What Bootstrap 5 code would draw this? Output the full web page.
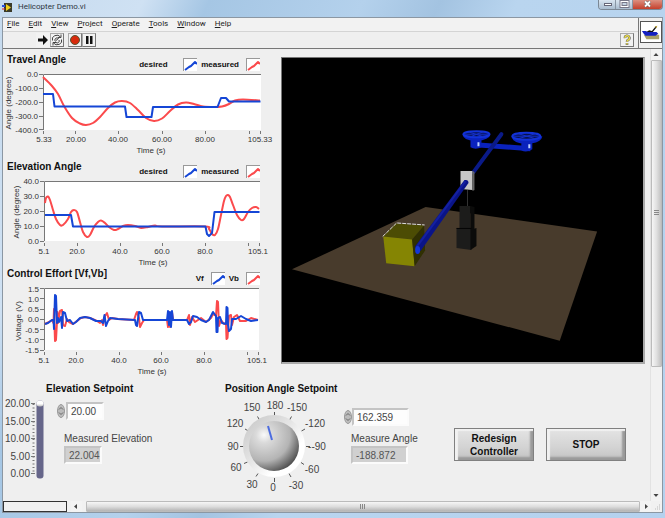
<!DOCTYPE html>
<html lang="en">
<head>
<meta charset="utf-8">
<meta name="viewport" content="width=device-width, initial-scale=1">
<title>Helicopter Demo.vi</title>
<link rel="stylesheet" href="https://cdn.jsdelivr.net/npm/bootstrap@5.3.0/dist/css/bootstrap.min.css">
<style>
  body { font: 10px/12px "Liberation Sans", Arial, sans-serif; color: #222; background: #b2d0ee; }
  svg { display: block; flex: none; }
  button { padding: 0; border: 0; color: inherit; }
  .app { padding: 0 2px 5px 2px; background: linear-gradient(115deg, #c5daee 0, #cfe1f3 130px, #a5c6e4 190px, #b4d1ec 330px, #a3c3e1 400px, #b9d5ef 470px, #b4d1ee 100%); }
  .titlebar { height: 17px; font: 8px/14px Roboto, sans-serif; color: #2c3440; }
  .titlebar .caption { padding-left: 6px; height: 14px; }
  .win-btns { height: 10px; border: 1px solid #7b8794; border-top: 0; border-radius: 0 0 4px 4px; overflow: hidden; }
  .win-btns button { width: 17px; background: linear-gradient(#d9e5f0, #a9bccf); border-right: 1px solid #8795a3; }
  .win-btns .win-close { width: 29px; background: linear-gradient(#dc9080, #c5402c); border: 0; }
  .frame { border: 1px solid #8b97a3; background: #efefef; }
  .menus { height: 14px; gap: 9px; padding-left: 4px; font: 8px/12px Roboto, sans-serif; border-bottom: 1px solid #d4d4d4; background: #f2f2f2; }
  .menus a { color: #222; text-decoration: none; }
  .tools { height: 16px; padding: 1px 0 0 33px; }
  .tool { width: 14px; height: 14px; background: #f2f2f2; border: 1px solid #aaa; border-right-color: #777; border-bottom-color: #777; }
  .tool.flat { border-color: transparent; }
  .topbar { border-bottom: 1px solid #777; }
  .vi-icon { border-left: 1px solid #777; padding: 3px 0 3px 1px; }
  .vi-icon svg { border: 1px solid #555; background: #fff; }
  .charts { flex: 0 0 270px; }
  .chart-head { height: 19px; padding: 0 13px 1px 4px; }
  h2 { font-size: 10px; line-height: 14px; font-weight: 700; margin: 0; color: #111; white-space: nowrap; }
  .key { font-size: 8px; line-height: 10px; font-weight: 700; gap: 4px; color: #111; }
  .key label, .key div { gap: 7px; }
  .key span { min-width: 8px; }
  .key.wide span { min-width: 37px; }
  .key svg { background: #fff; border-top: 1px solid #999; border-left: 1px solid #999; }
  .chart { width: 270px; overflow: visible; }
  .chart text { font-size: 8px; fill: #333; }
  .gauge { overflow: visible; }
  .gauge text { font-size: 10px; fill: #444; }
  .e { text-anchor: end; } .m { text-anchor: middle; }
  .area { fill: #fff; }
  .edge, .ticks { fill: none; stroke: #777; }
  .d { fill: none; stroke: #1546d6; stroke-width: 2; stroke-linejoin: round; }
  .r { fill: none; stroke: #fb4a4c; stroke-width: 2; stroke-linejoin: round; }
  .view3d { margin: 4px 5px 0 8px; border: 1px solid #777; border-right: 2px solid #aaa; border-bottom: 2px solid #aaa; background: #000; }
  .lower { padding-top: 5px; }
  .num { height: 18px; font-size: 10px; line-height: 12px; color: #444; padding: 1px 0 0 3px; background: #fdfdfd; border: 2px solid #fbfbfb; border-top-color: #c4c4c4; border-left-color: #c4c4c4; border-radius: 0; outline: 0; min-width: 0; }
  .num[readonly] { display: block; background: #d0d0d0; color: #555; }
  .w-s { width: 38px; }
  .w-l { width: 57px; }
  .fields label { font-size: 10px; line-height: 14px; color: #444; white-space: nowrap; display: block; margin-left: 7px; }
  .fields .num[readonly] { margin-left: 7px; }
  .elev-col { flex: 0 0 222px; }
  .scale-row { padding-top: 14px; }
  .elev-fields { padding-left: 2px; }
  .elev-fields .inner { padding: 6px 0 0 11px; }
  .elev-fields label { padding-top: 12px; }
  .angle-fields { padding-top: 26px; }
  .angle-fields label { padding-top: 6px; }
  .vslider { width: 8px; height: 78px; margin-top: 4px; }
  .vslider input { flex: none; width: 78px; height: 7px; margin: 0; transform: rotate(-90deg); -webkit-appearance: none; appearance: none; background: #66668a; border-radius: 3px; }
  .vslider input::-webkit-slider-thumb { -webkit-appearance: none; width: 6px; height: 7px; background: linear-gradient(90deg, #bbb, #fff 45%); border-radius: 3px; }
  .pushers { gap: 12px; padding: 46px 24px 0 0; }
  .push { height: 33px; width: 80px; font-size: 10px; line-height: 13px; font-weight: 700; color: #111; border: 1px solid #808080; background: linear-gradient(#e4e4e4, #d3d3d3 60%, #c2c2c2); box-shadow: inset 3px 2px 1px #f1f1f1, inset -3px -3px 2px #999; }
  .vbar { flex: 0 0 11px; background: #f1f1f1; border-left: 1px solid #e2e2e2; }
  .arrow { flex: none; background: #f3f3f3; width: 11px; height: 11px; }
  .vthumb { flex: 307; border: 1px solid #bbb; border-radius: 1px; background: linear-gradient(90deg, #f6f6f6, #e0e0e0 50%, #c2c2c2); }
  .vrest { flex: 124; }
  .hbar { height: 11px; background: #f1f1f1; }
  .status { width: 64px; border: 1px solid #333; }
  .hthumb { border: 1px solid #bbb; border-radius: 1px; background: linear-gradient(#f6f6f6, #dedede 50%, #b4b4b4); }
</style>
<script src="https://cdn.jsdelivr.net/npm/bootstrap@5.3.0/dist/js/bootstrap.bundle.min.js"></script>
</head>
<body>
<div class="app d-flex flex-column min-vh-100">
  <header class="titlebar d-flex justify-content-between align-items-start">
    <div class="d-flex align-items-center">
      <svg width="10" height="11" viewBox="0 0 10 11" aria-hidden="true"><rect x="2" y="1" width="8" height="9" fill="#3a3a2a"/><path d="M4 2l5 3.500-5 3.500z" fill="#f2d21c"/><path d="M0 4h3" stroke="#2b50e0" stroke-width="2"/><path d="M0 7h3" stroke="#e02a2a"/></svg>
      <span class="caption">Helicopter Demo.vi</span>
    </div>
    <div class="win-btns d-flex">
      <button aria-label="Minimize"><svg width="17" height="9"><rect x="5.500" y="3.500" width="7" height="2" fill="#fff" stroke="#667"/></svg></button>
      <button aria-label="Maximize"><svg width="17" height="9"><rect x="5" y="1.500" width="7" height="5" fill="none" stroke="#778" stroke-width="3"/><rect x="5" y="1.500" width="7" height="5" fill="none" stroke="#fff"/></svg></button>
      <button class="win-close" aria-label="Close"><svg width="29" height="9"><path d="M12 1.500l5 5m0-5l-5 5" stroke="#555" stroke-width="3"/><path d="M12 1.500l5 5m0-5l-5 5" stroke="#fff" stroke-width="2"/></svg></button>
    </div>
  </header>

  <div class="frame d-flex flex-column flex-grow-1">
    <div class="topbar d-flex">
      <div class="flex-grow-1">
        <nav class="menus d-flex">
          <a href="#"><u>F</u>ile</a><a href="#"><u>E</u>dit</a><a href="#"><u>V</u>iew</a><a href="#"><u>P</u>roject</a><a href="#"><u>O</u>perate</a><a href="#"><u>T</u>ools</a><a href="#"><u>W</u>indow</a><a href="#"><u>H</u>elp</a>
        </nav>
        <div class="tools d-flex">
          <button class="tool flat" aria-label="Run"><svg width="12" height="12"><path d="M1 4.500h5v-3.500l5 5-5 5v-3.500h-5z" fill="#111"/></svg></button>
          <button class="tool" aria-label="Run continuously"><svg width="12" height="12"><path d="M1.500 6.500a4.500 4 0 0 1 8-3.500M10 .5v3H7M10.500 5.500a4.500 4 0 0 1-8 3.500M2 11.500v-3h3M4.500 7.500a2 2 0 1 1 3-3M5 6.500l2.500-2M5 8.500a2 2 0 0 0 3-2.500" fill="none" stroke="#444"/></svg></button>
          <button class="tool ms-1" aria-label="Abort"><svg width="12" height="12"><circle cx="6" cy="6" r="4.500" fill="#d82a0c" stroke="#553" stroke-width="1"/></svg></button>
          <button class="tool" aria-label="Pause"><svg width="12" height="12"><path d="M3 2h2.500v8H3zM7 2h2.500v8H7z" fill="#111"/></svg></button>
          <button class="tool ms-auto me-1" aria-label="Help"><svg width="12" height="12"><path d="M4 4.200a2.200 2.200 0 1 1 3 1.800q-1 .5-1 1.700M6 9v2" fill="none" stroke="#666" stroke-width="2.600"/><path d="M4 4.200a2.200 2.200 0 1 1 3 1.800q-1 .5-1 1.700M6 9v1.600" fill="none" stroke="#eadb4a" stroke-width="1.400"/></svg></button>
        </div>
      </div>
      <div class="vi-icon"><svg width="22" height="22" viewBox="0 0 22 22" role="img" aria-label="VI icon"><path d="M3 14h17v5H6z" fill="#a8a068"/><path d="M1 10l4 0 3 1h9l2 2-3 2H5l-2-2z" fill="#1420c0"/><path d="M6 11l3-2 3 1 4-5 1 1-4 5z" fill="#111"/><path d="M15 5l3-1-1 3z" fill="#b49a30"/></svg></div>
    </div>

    <div class="d-flex flex-grow-1">
      <main class="flex-grow-1 d-flex flex-column">
        <div class="d-flex pt-1">
          <div class="charts">
            <section>
              <div class="chart-head d-flex justify-content-between">
                <h2>Travel Angle</h2>
                <div class="key wide d-flex align-items-end">
                  <div class="d-flex align-items-center"><span>desired</span><svg width="14" height="13"><path class="d" d="M1 11l4-3 2-1 4-4 2 2"/></svg></div>
                  <div class="d-flex align-items-center"><span>measured</span><svg width="14" height="13"><path class="r" d="M1 11l4-3 2-1 4-4 2 2"/></svg></div>
                </div>
              </div>
              <svg class="chart" height="88" viewBox="3 72 270 88">
                <path class="area" d="M43 74h218v56H43z"/><path class="edge" d="M43.500 130V74.500H261"/>
                <path class="ticks" d="M39 74.500h4M39 88.500h4M39 102.500h4M39 116.500h4M39 129.500h4M43.500 131v3M75.500 131v3M118.500 131v3M162.500 131v3M205.500 131v3M249.500 131v3M260.500 131v3"/>
                <g class="e"><text x="38" y="77">0.0</text><text x="38" y="91">-100.0</text><text x="38" y="105">-200.0</text><text x="38" y="119">-300.0</text><text x="38" y="133">-400.0</text></g>
                <g class="m"><text x="44" y="142">5.33</text><text x="76" y="142">20.00</text><text x="118" y="142">40.00</text><text x="162" y="142">60.00</text><text x="205" y="142">80.00</text><text x="260" y="142">105.33</text><text x="151" y="153">Time (s)</text><text transform="translate(11 103) rotate(-90)">Angle (degree)</text></g>
                <path class="r" data-pts="43,77 52,86 58,94 64,106 72,118 80,123.500 86,125 93,123 100,117 108,108 115,102.500 122,101 130,103 138,110 146,118 154,121 162,118.500 170,111 178,104.500 186,102.500 194,104 203,106.500 214,107 222,106.500 229,104 235,100.500 243,99.500 260,100.500"/>
                <path class="d" d="M43 94H53L54.500 106.500H125L126.500 117H151.500L153 107H217.500L221 98H226L229 101.500H260.500"/>
              </svg>
            </section>
            <section>
              <div class="chart-head d-flex justify-content-between">
                <h2>Elevation Angle</h2>
                <div class="key wide d-flex align-items-end">
                  <div class="d-flex align-items-center"><span>desired</span><svg width="14" height="13"><path class="d" d="M1 11l4-3 2-1 4-4 2 2"/></svg></div>
                  <div class="d-flex align-items-center"><span>measured</span><svg width="14" height="13"><path class="r" d="M1 11l4-3 2-1 4-4 2 2"/></svg></div>
                </div>
              </div>
              <svg class="chart" height="88" viewBox="3 179 270 88">
                <path class="area" d="M44 181h216v60H44z"/><path class="edge" d="M44.500 241V181.500H260"/>
                <path class="ticks" d="M40 181.500h4M40 196.500h4M40 211.500h4M40 226.500h4M40 241.500h4M44.500 243v3M77.500 243v3M120.500 243v3M162.500 243v3M205.500 243v3M248.500 243v3M259.500 243v3"/>
                <g class="e"><text x="39" y="184">40.0</text><text x="39" y="199">30.0</text><text x="39" y="214">20.0</text><text x="39" y="229">10.0</text><text x="39" y="244">0.0</text></g>
                <g class="m"><text x="44" y="254">5.1</text><text x="77" y="254">20.0</text><text x="120" y="254">40.0</text><text x="162" y="254">60.0</text><text x="205" y="254">80.0</text><text x="258" y="254">105.1</text><text x="153" y="265">Time (s)</text><text transform="translate(19 212) rotate(-90)">Angle (degree)</text></g>
                <path class="r" data-pts="45,203 46,198 48,196.500 50,200 53,210 56,219 60,225 63,225 68,219 71,212 74,210 77,212 80,222 83,232 87,237 90,235 94,227 98,222 101,220.500 105,223 109,227 114,230 118,229 123,226 128,225 135,226 141,228 148,227 155,225.500 162,226.500 205,226.500 209,229 212,234 215,235 218,229 221,215 224,201 226,196 228,195 230,197 233,205 237,215 241,220 244,219 248,212 252,208 256,207 259,209"/>
                <path class="d" d="M45 215H71L73 226.500H205.500L207 234L209 236L212 233L214.500 212H259.500"/>
              </svg>
            </section>
            <section>
              <div class="chart-head d-flex justify-content-between">
                <h2>Control Effort [Vf,Vb]</h2>
                <div class="key d-flex align-items-end">
                  <div class="d-flex align-items-center"><span>Vf</span><svg width="14" height="13"><path class="d" d="M1 11l4-3 2-1 4-4 2 2"/></svg></div>
                  <div class="d-flex align-items-center"><span>Vb</span><svg width="14" height="13"><path class="r" d="M1 11l4-3 2-1 4-4 2 2"/></svg></div>
                </div>
              </div>
              <svg class="chart" height="91" viewBox="3 286 270 91">
                <path class="area" d="M44 288h215v62H44z"/><path class="edge" d="M44.500 350V288.500H259"/>
                <path class="ticks" d="M40 288.500h4M40 298.500h4M40 309.500h4M40 319.500h4M40 329.500h4M40 339.500h4M40 350.500h4M44.500 352v3M76.500 352v3M119.500 352v3M161.500 352v3M204.500 352v3M247.500 352v3M258.500 352v3"/>
                <g class="e"><text x="39" y="292">1.5</text><text x="39" y="302">1.0</text><text x="39" y="312">0.5</text><text x="39" y="322">0.0</text><text x="39" y="333">-0.5</text><text x="39" y="343">-1.0</text><text x="39" y="353">-1.5</text></g>
                <g class="m"><text x="44" y="363">5.1</text><text x="76" y="363">20.0</text><text x="119" y="363">40.0</text><text x="161" y="363">60.0</text><text x="204" y="363">80.0</text><text x="257" y="363">105.1</text><text x="152" y="374">Time (s)</text><text transform="translate(21 321) rotate(-90)">Voltage (V)</text></g>
                <path class="r" d="M45 324L49 322 52 320 53.500 323 54 309 55 341 56 340 57.500 312 58 323 60 311 62 310 63 325 65 326 67 319 69 322 73 324 77 321 81 318 85 317 90 318 97 321 100 323 102 320 103 325 105 316 107 313 109 320 112 318 118 319 134 320 136 314 137 312 139 318 140 327 142 323 144 320 167 320 168 327 169 312 170 327 172 312 173 320 187 320 189 315 190 325 192 317 195 322 201 318 206 322 211 318 213 314 216 316 217 301 218 302 219 326 221 320 224 324 226 323 226.500 339 227.500 338 229 316 231 315 232 325 234 317 237 315 240 321 246 321 251 318 258 320"/>
                <path class="d" d="M45 324L48 323 52 320 53.500 320 54 329 55 295 56 296 57 323 58 318 59 322 61 317 62 328 63 312 65 313 67 321 70 320 73 324 76 322 80 318 85 317 90 318 96 321 101 321 103 323 104.500 315 106 326 108 321 110 318 118 319 135 320 136 325 137 326 139 312 141 313 143 320 167 320 168 311 169 325 170 312 171 327 172 311 173 320 187 320 189 324 191 322 193 316 197 317 201 320 206 322 209 320 213 312 216 316 216.500 332 217.500 332 218 318 220 317 222 323 226 324 226.500 307 227.500 308 228 325 229 331 231 329 232 319 236 319 241 316 246 319 251 321 258 320"/>
              </svg>
            </section>
          </div>
          <div class="flex-grow-1">
            <div class="view3d">
              <svg width="100%" height="304" viewBox="282 58 362 304" role="img" aria-label="3D helicopter view">
                <path d="M292 269.500L426 207 598 231.500 560.500 341z" fill="#483b2c"/>
                <path d="M468 190v17" stroke="#333"/>
                <path d="M460 206h11v24h-11zM457 228h15v22l-15-2z" fill="#1c1c1b"/><path d="M471 206l4 1v22l-4 1zM471 230l6-2v18l-6 4z" fill="#0b0b0a"/>
                <path d="M457 228.500h15" stroke="#050505"/>
                <g fill="#0a22bd"><path d="M476 142l55 4v5l-55-4z"/><path d="M471 138h11v9q-6 3-11 0zM522 140h11v9q-6 4-11 1z"/>
                <path d="M463 134h28q-1 6-14 6.500T463 134zM512 136h31q-1 7-15 7.500T512 136z"/></g>
                <ellipse cx="477" cy="134" rx="13" ry="3" fill="#07124f" stroke="#1232d8" stroke-width="2"/>
                <ellipse cx="527" cy="136" rx="14" ry="3.500" fill="#07124f" stroke="#1232d8" stroke-width="2"/>
                <path d="M465 134h24M470 132l14 4.500M484 131.500l-13 5M514 136h26M519 133.500l17 5M536 133.500l-17 5" stroke="#1430c8"/>
                <path d="M479 142v4M530 144v4" stroke="#bcd0ff" stroke-width="2"/>
                <path d="M474 172L502 134" stroke="#0a1a88" stroke-width="4" stroke-linecap="round"/>
                <path d="M461 171h12v19l-12-1z" fill="#c6c6c6"/><path d="M473 171l2 1v18l-2 1z" fill="#666"/>
                <path d="M383.500 236.500L396 223.500 424.500 225.500 412.500 239.500z" fill="#4c4c04"/><path d="M383.500 236.500l29 3 2.500 27-28.500-3z" fill="#858503"/><path d="M412.500 239.500l12-14 1 25-10.500 16z" fill="#303002"/>
                <path d="M383 236.500L397 223 425 225" fill="none" stroke="#ddd" stroke-dasharray="4 1"/>
                <path d="M415 247L465 180q4-1 4 3L421 251z" fill="#0a1488"/><path d="M417 247L466 181" stroke="#1420a2" stroke-width="2"/>
                <ellipse cx="418" cy="250" rx="2.500" ry="4" fill="#1438d8"/>
              </svg>
            </div>
          </div>
        </div>

        <div class="lower d-flex">
          <section class="elev-col d-flex">
            <div class="scale-row d-flex">
              <svg class="gauge" width="33" height="88" viewBox="3 396 33 88">
                <g class="e"><text x="30" y="407">20.00</text><text x="30" y="425">15.00</text><text x="30" y="442">10.00</text><text x="30" y="460">5.00</text><text x="30" y="477">0.00</text></g>
                <path d="M33.500 404v70" stroke="#777" stroke-width="2" stroke-dasharray="1 2.500"/><path class="ticks" d="M31 403.500h4M31 421.500h4M31 438.500h4M31 456.500h4M31 473.500h4"/>
              </svg>
              <div class="vslider d-flex justify-content-center align-items-center"><input type="range" min="0" max="20" value="20" aria-labelledby="elev"></div>
            </div>
            <div class="fields elev-fields">
              <h2 id="elev">Elevation Setpoint</h2>
              <div class="inner">
                <div class="d-flex align-items-center">
                  <svg width="9" height="14" aria-hidden="true"><ellipse cx="4" cy="7" rx="3.500" ry="6.500" fill="#bcbcbc" stroke="#999"/><path d="M2 5.500l2-2 2 2M2 8.500l2 2 2-2" fill="none" stroke="#666"/></svg>
                  <input class="num w-s" type="text" value="20.00" aria-labelledby="elev">
                </div>
                <label for="melev">Measured Elevation</label>
                <input class="num w-s" id="melev" type="text" readonly value="22.004">
              </div>
            </div>
          </section>
          <section class="d-flex">
            <div>
              <h2 id="posang">Position Angle Setpoint</h2>
              <svg class="gauge" width="119" height="98" viewBox="225 397 119 98" role="img" aria-labelledby="posang">
                <defs>
                  <linearGradient id="ring" x1="0" y1="0" x2="1" y2="1"><stop offset="0" stop-color="#c4c4c4"/><stop offset=".45" stop-color="#e6e6e6"/><stop offset=".7" stop-color="#fff"/></linearGradient>
                  <radialGradient id="ball" cx=".3" cy=".28" r=".8"><stop offset="0" stop-color="#fafafa"/><stop offset=".2" stop-color="#dadada"/><stop offset=".65" stop-color="#b4b4b4"/><stop offset="1" stop-color="#4c4c4c"/></radialGradient>
                </defs>
                <g stroke="#555"><path id="tk" d="M274.500 413v4M274.500 479v4M240 447.500h4M306 447.500h4M257.500 417.500l2 3.500M291.500 417.500l-2 3.500M245 430l3.500 2M305 430l-3.500 2M244 464.500l3.500-1.500M304 465.500l-3-2M256 477.500l2-3M291 478l-2-3.500"/></g>
                <circle cx="274" cy="447" r="31" fill="url(#ring)"/>
                <circle cx="274" cy="447" r="25" fill="url(#ball)"/>
                <path d="M268 427l4 14" stroke="#4c6ce0" stroke-width="2"/>
                <g class="m"><text x="275" y="410">180</text><text x="252" y="412">150</text><text x="297" y="412">-150</text><text x="235" y="428">120</text><text x="315" y="428">-120</text><text x="233" y="451">90</text><text x="317" y="451">--90</text><text x="236" y="472">60</text><text x="312" y="474">-60</text><text x="252" y="489">30</text><text x="273" y="492">0</text><text x="296" y="490">-30</text></g>
              </svg>
            </div>
            <div class="fields angle-fields">
              <div class="d-flex align-items-center">
                <svg width="8" height="14" aria-hidden="true"><ellipse cx="4" cy="7" rx="3.500" ry="6.500" fill="#bcbcbc" stroke="#999"/><path d="M2 5.500l2-2 2 2M2 8.500l2 2 2-2" fill="none" stroke="#666"/></svg>
                <input class="num w-l" type="text" value="162.359" aria-labelledby="posang">
              </div>
              <label for="mang">Measure Angle</label>
              <input class="num w-l" id="mang" type="text" readonly value="-188.872">
            </div>
          </section>
          <div class="pushers d-flex align-items-start ms-auto">
            <button class="push">Redesign<br>Controller</button>
            <button class="push">STOP</button>
          </div>
        </div>
      </main>
      <div class="vbar d-flex flex-column">
        <button class="arrow" aria-label="Scroll up"><svg width="10" height="11"><path d="M2.500 7l2.500-3 2.500 3z" fill="#444"/></svg></button>
        <div class="vthumb d-flex align-items-center justify-content-center"><svg width="5" height="6"><path d="M0 .5h5M0 2.500h5M0 4.500h5" stroke="#888"/></svg></div>
        <div class="vrest"></div>
        <button class="arrow" aria-label="Scroll down"><svg width="10" height="11"><path d="M2.500 4l2.500 3 2.500-3z" fill="#444"/></svg></button>
      </div>
    </div>
    <div class="hbar d-flex">
      <div class="status"></div>
      <button class="arrow ms-1" aria-label="Scroll left"><svg width="10" height="11"><path d="M6 3L3 5.500 6 8z" fill="#444"/></svg></button>
      <div class="hthumb flex-grow-1 ms-1 d-flex align-items-center justify-content-center"><svg width="6" height="5"><path d="M.5 0v5M2.500 0v5M4.500 0v5" stroke="#888"/></svg></div>
      <button class="arrow" aria-label="Scroll right"><svg width="10" height="11"><path d="M5 3l3 2.500L5 8z" fill="#444"/></svg></button>
      <svg width="11" height="11" aria-hidden="true"><path d="M8 4h1M6 6h1M8 6h1M4 8h1M6 8h1M8 8h1" stroke="#bbb"/></svg>
    </div>
  </div>
</div>
<script>
  // Smooth curves through the sampled points of each measured trace.
  document.querySelectorAll('[data-pts]').forEach(function (el) {
    var p = el.dataset.pts.split(' ').map(function (s) { return s.split(',').map(Number); });
    var d = 'M' + p[0];
    for (var i = 0; i < p.length - 1; i++) {
      var a = p[i - 1] || p[i], b = p[i], c = p[i + 1], e = p[i + 2] || c;
      d += 'C' + [b[0] + (c[0] - a[0]) / 6, b[1] + (c[1] - a[1]) / 6, c[0] - (e[0] - b[0]) / 6, c[1] - (e[1] - b[1]) / 6, c[0], c[1]];
    }
    el.setAttribute('d', d);
  });
</script>
</body>
</html>
